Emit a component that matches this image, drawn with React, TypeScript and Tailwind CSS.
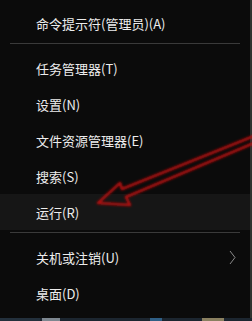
import React from 'react'

const font = { fontFamily: '"Noto Sans CJK SC", "Noto Sans", sans-serif' }

type Item = { label: string; hot?: boolean; sub?: boolean }

const groupA: Item[] = [{ label: '命令提示符(管理员)(A)' }]
const groupB: Item[] = [
  { label: '任务管理器(T)' },
  { label: '设置(N)' },
  { label: '文件资源管理器(E)' },
  { label: '搜索(S)' },
  { label: '运行(R)', hot: true },
]
const groupC: Item[] = [{ label: '关机或注销(U)', sub: true }, { label: '桌面(D)' }]

function Row({ item }: { item: Item }) {
  return (
    <div
      className={
        'h-[36px] flex items-center pl-[36px] pr-[14px] text-[13px] text-[#ededed] ' +
        (item.hot ? 'bg-[#161616]' : '')
      }
    >
      <span className="flex-1 leading-none">{item.label}</span>
      {item.sub && (
        <svg width={7} height={15} viewBox="0 0 7 15" fill="none" stroke="#8a8a8a" strokeWidth={1}>
          <path d="M1 1L6 7.5L1 14" />
        </svg>
      )}
    </div>
  )
}

function Sep() {
  return <div className="mt-[2px] mb-[6px] mx-[10px] h-px bg-[#3a3a3a]" />
}

// red hand-drawn arrow pointing at 运行
function Arrow() {
  return (
    <svg className="absolute inset-0 pointer-events-none" width={252} height={321} viewBox="0 0 252 321">
      <defs>
        <filter id="soft" x="-20%" y="-20%" width="140%" height="140%">
          <feGaussianBlur stdDeviation="1.1" />
        </filter>
      </defs>
      <g filter="url(#soft)" stroke="#b01010" strokeWidth={2.6} fill="none" strokeLinejoin="round" strokeLinecap="round">
        <path d="M254 136L122 189L120 183L98 203L130 205L126 197L254 143" />
      </g>
    </svg>
  )
}

export default function App() {
  return (
    <div className="w-[252px] h-[321px] bg-[#0b0b0b] relative flex flex-col overflow-hidden" style={font}>
      <div className="flex-1 flex flex-col pt-[5px] border-r-2 border-[#2f332f]">
        {groupA.map(i => <Row key={i.label} item={i} />)}
        <Sep />
        {groupB.map(i => <Row key={i.label} item={i} />)}
        <Sep />
        {groupC.map(i => <Row key={i.label} item={i} />)}
      </div>
      <div className="h-[3px] flex bg-[#1c2630]">
        <div className="w-[40px] bg-[#23303c]" />
        <div className="w-[18px] ml-[2px] bg-[#7d8790]" />
        <div className="w-[90px]" />
        <div className="w-[12px] bg-[#2f5f86]" />
        <div className="w-[40px]" />
        <div className="w-[22px] bg-[#8a8060]" />
      </div>
      <Arrow />
    </div>
  )
}
